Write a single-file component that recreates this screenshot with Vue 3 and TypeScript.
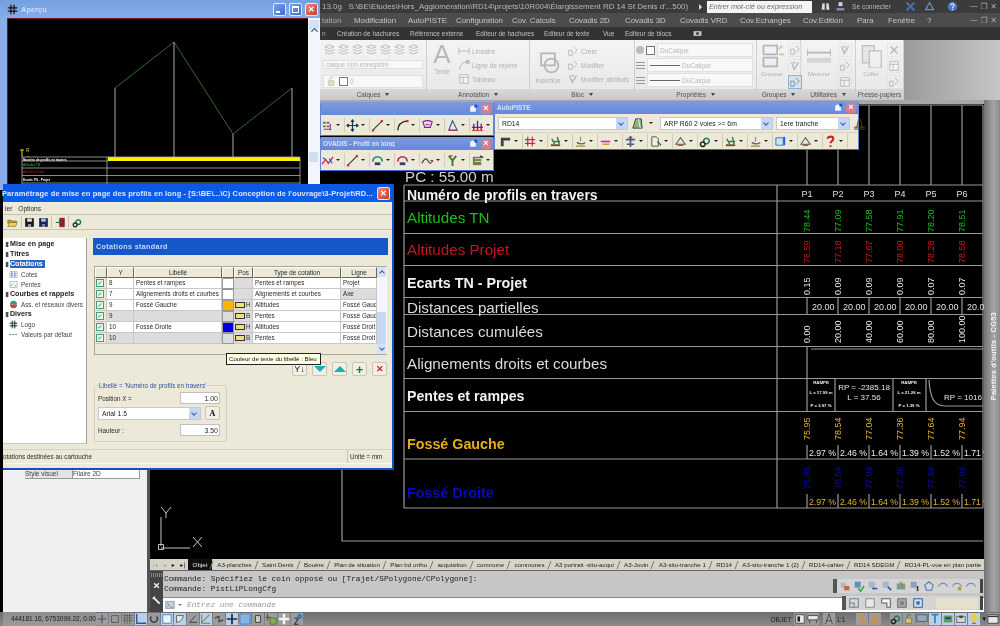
<template>
  <div class="screen">
    <!-- AutoCAD window behind everything -->
    <div class="acad">
      <div class="acad-title">
        <span class="path">13.0g &nbsp; S:\BE\Etudes\Hors_Agglomération\RD14\projets\10R004\Élargissement RD 14 St Denis d'...500)</span>
        <span class="arrow-r"></span>
        <span class="search">Entrer mot-clé ou expression</span>
        <Ico n="binoc" class="ti" />
        <Ico n="user" class="ti" />
        <span class="login">Se connecter</span>
        <Ico n="xchg" class="ti wide" />
        <Ico n="tri3" class="ti" />
        <Ico n="help" class="ti wide" />
        <span class="winbtns">— ❐ ✕</span>
      </div>
      <div class="acad-menu">
        <span v-for="m in menus" :key="m.t" :style="{ width: m.w + 'px' }">{{ m.t }}</span>
        <span class="winbtns">— ❐ ✕</span>
      </div>
      <div class="acad-tabs">
        <span v-for="m in ribbonTabs" :key="m.t" :style="{ width: m.w + 'px' }">{{ m.t }}</span>
        <Ico n="cam" class="ti" />
      </div>

      <div class="ribbon">
        <div class="panel" style="width: 107px">
          <div class="panel-body col">
            <div class="rib-row"><Ico v-for="(n, i) in calqueIcons" :key="i" :n="n" class="fade" /></div>
            <div class="rib-select">calque non enregistré</div>
            <div class="rib-select"><Ico n="lock" class="fade" /><i class="sq"></i>0</div>
          </div>
          <div class="panel-label">Calques <b></b></div>
        </div>
        <div class="panel" style="width: 103px">
          <div class="panel-body">
            <div class="big">
              <span class="big-a">A</span>
              <span>Texte</span>
            </div>
            <div class="col list">
              <span><Ico n="dim" class="fade" />Linéaire</span>
              <span><Ico n="lead" class="fade" />Ligne de repère</span>
              <span><Ico n="table" class="fade" />Tableau</span>
            </div>
          </div>
          <div class="panel-label">Annotation <b></b></div>
        </div>
        <div class="panel" style="width: 105px">
          <div class="panel-body">
            <div class="big ins">
              <Ico n="insert" class="big-ico fade" />
              <span>Insertion</span>
            </div>
            <div class="col list">
              <span><Ico n="bk" class="fade" />Créer</span>
              <span><Ico n="bk" class="fade" />Modifier</span>
              <span><Ico n="bk2" class="fade" />Modifier attributs</span>
            </div>
          </div>
          <div class="panel-label">Bloc <b></b></div>
        </div>
        <div class="panel" style="width: 122px">
          <div class="panel-body col props">
            <div class="prop-row"><i class="ball"></i><i class="sq"></i><div class="rib-select">DuCalque</div></div>
            <div class="prop-row"><i class="bars"></i><div class="rib-select"><i class="ln"></i>DuCalque</div></div>
            <div class="prop-row"><i class="bars"></i><div class="rib-select"><i class="ln"></i>DuCalque</div></div>
          </div>
          <div class="panel-label">Propriétés <b></b></div>
        </div>
        <div class="panel" style="width: 44px">
          <div class="panel-body">
            <div class="big small"><Ico n="group" class="big-ico fade" /><span>Grouper</span></div>
            <div class="col tiny"><Ico n="bk" class="fade" /><Ico n="bk2" class="fade" /><Ico n="bk" class="fade on" /></div>
          </div>
          <div class="panel-label">Groupes <b></b></div>
        </div>
        <div class="panel" style="width: 55px">
          <div class="panel-body">
            <div class="big small"><Ico n="measure" class="big-ico fade" /><span>Mesurer</span></div>
            <div class="col tiny"><Ico n="bk2" class="fade" /><Ico n="bk" class="fade" /><Ico n="table" class="fade" /></div>
          </div>
          <div class="panel-label">Utilitaires <b></b></div>
        </div>
        <div class="panel" style="width: 48px">
          <div class="panel-body">
            <div class="big small"><Ico n="paste" class="big-ico fade" /><span>Coller</span></div>
            <div class="col tiny"><Ico n="cross" class="fade" /><Ico n="table" class="fade" /><Ico n="bk" class="fade" /></div>
          </div>
          <div class="panel-label">Presse-papiers</div>
        </div>
        <div class="ribbon-rest"></div>
      </div>

      <div class="main">
        <div class="side">
          <div class="side-inner">
            <div class="prop-line"><span>Style visuel</span><span class="val">Filaire 2D</span></div>
          </div>
        </div>
        <div class="center">
          <div class="cad">
            <svg class="drawing" viewBox="150 104 834 455" width="834" height="455">
              <g class="grey-lines">
                <path d="M857 105H983M983 105V508" />
                <path v-for="x in px" :key="x" :d="`M${x} 105V185`" />
                <path d="M342 470V541H983" />
                <path v-for="y in rowLines" :key="y" :d="`M404 ${y}H983`" />
                <path d="M404 185V508M777 185V508" />
                <path v-for="x in px" :key="'d' + x" :d="`M${x} 298V314`" />
                <path d="M807 346V378M811 349H983" />
                <path d="M807 379V411M835 379V411M893 379V411M926 379V411" />
                <path d="M929 380C930 396 933 406 945 406H983" />
                <template v-for="x in px" :key="'p' + x">
                  <path :d="`M${x} 445V459M${x} 494V508`" />
                </template>
              </g>
              <path class="ucs" d="M161 546V517M161 548H190M158.500 544.500h5v5h-5zM193 537l9 10M202 537l-9 10M161 507l5 6M171 507l-5 6v5" />

              <text x="405" y="182" class="lab" fill="#cfcfcf" font-size="15.200">PC : 55.00 m</text>
              <text v-for="r in labels" :key="r.t" x="407" :y="r.y" :fill="r.c" :font-size="r.s ?? 15.2" :font-weight="r.s ? 700 : 400" class="lab">{{ r.t }}</text>

              <text v-for="(x, i) in px" :key="'pn' + i" :x="x" y="197" class="num mid" fill="#e0e0e0">P{{ i + 1 }}</text>

              <template v-for="s in rotated" :key="s.k">
                <text
                  v-for="(v, i) in s.v"
                  :key="i"
                  class="num"
                  :fill="s.c"
                  :transform="`translate(${px[i] + 3.2} ${s.y}) rotate(-90)`"
                >{{ v }}</text>
              </template>

              <text v-for="(x, i) in px" :key="'dp' + i" :x="x + 5" y="310" class="num" fill="#e0e0e0">20.00</text>

              <g class="tinybox">
                <text x="821" y="384" class="mid b">RAMPE</text>
                <text x="821" y="394" class="mid">L = 17.99 m</text>
                <text x="821" y="407" class="mid">P = 2.97 %</text>
                <text x="909" y="384" class="mid b">RAMPE</text>
                <text x="909" y="394" class="mid">L = 21.26 m</text>
                <text x="909" y="407" class="mid">P = 1.39 %</text>
              </g>
              <text x="864" y="390" class="num small mid" fill="#e6e6e6">RP = -2385.18</text>
              <text x="864" y="400" class="num small mid" fill="#e6e6e6">L = 37.56</text>
              <text x="944" y="400" class="num small" fill="#e6e6e6">RP = 1016</text>

              <text v-for="(v, i) in percents" :key="'g' + i" :x="px[i] + 2" y="456" class="num pc" fill="#e8e8e8">{{ v }} %</text>
              <text v-for="(v, i) in percents" :key="'h' + i" :x="px[i] + 2" y="505" class="num pc" fill="#e0b428">{{ v }} %</text>
            </svg>
          </div>

          <div class="sheets">
            <div class="sheet-nav">
              <i class="off">|◂</i><i class="off">◂</i><i>▸</i><i>▸|</i>
            </div>
            <span class="sheet active">Objet</span>
            <span v-for="t in sheets" :key="t" class="sheet">{{ t }}</span>
          </div>

          <div class="cmd">
            <div class="cmd-grip">
              <i class="dots"></i>
              <Ico n="closew" />
              <Ico n="wrench" />
            </div>
            <div class="cmd-body">
              <div class="cmd-hist">
                <div>Commande: Spécifiez le coin opposé ou [Trajet/SPolygone/CPolygone]:</div>
                <div>Commande: PistLiPLongCfg</div>
              </div>
              <div class="cmd-input"><Ico n="prompt" /><b></b>Entrez une commande</div>
              <div class="dock dock-a">
                <Ico v-for="(n, i) in dockA" :key="i" :n="n" />
              </div>
              <div class="dock dock-b">
                <Ico v-for="(n, i) in dockB" :key="i" :n="n" />
                <span class="dock-sel"></span>
              </div>
            </div>
          </div>
        </div>
        <div class="palette"><span>Palettes d'outils - CG53</span></div>
      </div>

      <div class="status">
        <span class="coords">444181.16, 6753099.22, 0.00</span>
        <Ico v-for="(n, i) in statusLeft" :key="i" :n="n.i" :class="['st', { on: n.on }]" />
        <span class="spacer"></span>
        <span class="objet">OBJET</span>
        <Ico n="sh1" class="st" /><Ico n="sh2" class="st" />
        <Ico n="anno" class="st gap" /><span class="one">1:1</span>
        <Ico n="anno2" class="st gap-s" /><Ico n="anno2" class="st" />
        <Ico n="gearg" class="st gap-s" /><Ico n="lock" class="st" /><Ico n="mon" class="st" />
        <Ico v-for="(n, i) in statusRight" :key="'r' + i" :n="n" class="st on" />
        <span class="arrow-sm">▾</span>
        <Ico n="win" class="st" />
      </div>
    </div>

    <!-- floating toolbars -->
    <div class="tb-win" style="left: 320px; top: 102px; width: 174px">
      <div class="tb-title"><span></span><Ico n="pin" /><i class="x">×</i></div>
      <div class="tb-row"><template v-for="n in tbA" :key="n"><Ico :n="n" /><i class="dd"></i><i class="sep"></i></template></div>
    </div>
    <div class="tb-win" style="left: 320px; top: 137px; width: 174px">
      <div class="tb-title"><span>OVADIS - Profil en long</span><Ico n="pin" /><i class="x">×</i></div>
      <div class="tb-row"><template v-for="(n, i) in tbB" :key="i"><Ico :n="n" /><i class="dd"></i><i class="sep"></i></template></div>
    </div>
    <div class="tb-win auto" style="left: 494px; top: 101px; width: 365px">
      <div class="tb-title"><span>AutoPISTE</span><Ico n="pin" /><i class="x">×</i></div>
      <div class="tb-sel-row">
        <div class="xpsel" style="width: 130px">RD14<i class="xparrow"></i></div>
        <Ico n="road" /><i class="dd"></i>
        <div class="xpsel" style="width: 113px">ARP R60 2 voies &gt;= 6m<i class="xparrow"></i></div>
        <div class="xpsel" style="width: 74px">1ere tranche<i class="xparrow"></i></div>
        <Ico n="prof" />
      </div>
      <div class="tb-row"><template v-for="(n, i) in tbC" :key="i"><Ico :n="n" /><i class="dd"></i><i class="sep"></i></template></div>
    </div>

    <!-- Aperçu -->
    <div class="apercu">
      <div class="ap-title">
        <Ico n="hash" />
        <span>Aperçu</span>
        <i class="xp-b"><u class="g-min"></u></i>
        <i class="xp-b"><u class="g-max"></u></i>
        <i class="xp-b red">✕</i>
      </div>
      <div class="ap-body">
        <svg viewBox="7 18 301 166" width="301" height="166" class="ap-svg">
          <path d="M7 18.500H308M7.500 18V184" stroke="#701818" fill="none" />
          <path d="M115 88L174 42L233 134L292 88" stroke="#2f6a2a" fill="none" />
          <path d="M115 88V157M174 42V157M233 134V157M292 88V157" stroke="#a8a8a8" fill="none" />
          <rect x="108" y="157" width="192" height="4" fill="#fff000" />
          <path d="M22 157H300M22 161H108M22 168H300M22 175.500H300M22 183H300M22 157V184M107 157V184M300 157V184" stroke="#b0b0b0" fill="none" stroke-width=".8" />
          <path d="M22 157V150M20 150h4M28 157v-1" stroke="#e8d820" fill="none" />
          <text x="26" y="152" fill="#e8d820" font-size="4.500" class="lab">R</text>
          <text x="23" y="160.500" fill="#fff" font-size="3.200" font-weight="700" class="lab">Numéro de profils en travers</text>
          <text x="23" y="166" fill="#30c030" font-size="3.200" class="lab">Altitudes TN</text>
          <text x="23" y="173" fill="#b02020" font-size="3.200" class="lab">Altitudes Projet</text>
          <text x="23" y="181" fill="#fff" font-size="3.200" font-weight="700" class="lab">Ecarts TN - Projet</text>
        </svg>
        <div class="ap-scroll">
          <i class="ap-up"><u></u></i>
          <i class="ap-thumb"></i>
        </div>
      </div>
    </div>

    <!-- main dialog -->
    <div class="dlg">
      <div class="dlg-title">
        <span>Paramétrage de mise en page des profils en long - [S:\BE\...\C) Conception de l'ouvrage\3-Projet\RD...</span>
        <i class="xp-b red">✕</i>
      </div>
      <div class="dlg-menu"><span>ier</span><span>Options</span></div>
      <div class="dlg-tools">
        <Ico n="open" /><i class="tsep"></i><Ico n="save" /><Ico n="saveb" /><i class="tsep"></i><Ico n="exit" /><i class="tsep"></i><Ico n="gearg" />
      </div>
      <div class="dlg-body">
        <div class="tree">
          <div v-for="t in tree" :key="t.t" :class="['node', { child: t.child, bold: t.bold }]">
            <Ico v-if="t.i" :n="t.i" />
            <span :class="{ sel: t.sel }">{{ t.t }}</span>
          </div>
        </div>
        <div class="content">
          <div class="blue-head">Cotations standard</div>
          <div class="grid-wrap">
            <div class="grid">
              <div class="hd"></div>
              <div class="hd">Y</div>
              <div class="hd">Libellé</div>
              <div class="hd"></div>
              <div class="hd">Pos</div>
              <div class="hd">Type de cotation</div>
              <div class="hd">Ligne</div>
              <template v-for="(r, i) in cotes" :key="i">
                <div class="cell chk"><i class="check">✓</i></div>
                <div :class="['cell', { grey: r.grey }]">{{ r.y }}</div>
                <div :class="['cell', { grey: r.grey }]">{{ r.lib }}</div>
                <div class="cell swatch" :style="{ background: r.col }"></div>
                <div class="cell grey pos">
                  <template v-if="r.pos"><i class="yel"></i>{{ r.pos }}</template>
                </div>
                <div class="cell">{{ r.type }}</div>
                <div :class="['cell', { grey: r.ligne === 'Axe' }]">{{ r.ligne }}</div>
              </template>
            </div>
            <div class="grid-scroll">
              <i class="sb-btn"><u class="up"></u></i>
              <i class="sb-track"></i>
              <i class="sb-thumb"></i>
              <i class="sb-btn"><u class="down"></u></i>
            </div>
          </div>
          <div class="tip">Couleur de texte du libellé : Bleu</div>
          <div class="actions">
            <button class="first">Y<span>↓</span></button>
            <button><i class="tdown"></i></button>
            <button><i class="tup"></i></button>
            <button class="plus">+</button>
            <button class="del">✕</button>
          </div>
          <fieldset class="group">
            <legend>Libellé = 'Numéro de profils en travers'</legend>
            <div class="f-row r1"><span>Position X =</span><span class="inp">1.00</span></div>
            <div class="f-row r2">
              <div class="xpsel f-sel">Arial 1.5<i class="xparrow"></i></div>
              <button class="font-btn">A</button>
            </div>
            <div class="f-row r3"><span>Hauteur :</span><span class="inp">3.50</span></div>
          </fieldset>
        </div>
      </div>
      <div class="dlg-status">
        <span class="s1">otations destinées au cartouche</span>
        <span class="s2">Unité = mm</span>
      </div>
    </div>
  </div>
</template>

<script setup lang="ts">
import { h } from "vue";

interface Shape {
  d: string;
  f?: string;
  s?: string;
  w?: number;
}

const icons: Record<string, Shape[]> = {
  hash: [{ d: "M5 1V13M9 1V13M1 5H13M1 9H13", s: "#101010", w: 1.6 }],
  open: [
    { d: "M1 4h4l1 1h6v3H1z", f: "#c89820", s: "#604808", w: 0.6 },
    { d: "M1 12l2-5h10l-2 5z", f: "#f0d050", s: "#604808", w: 0.6 },
  ],
  save: [
    { d: "M1.500 1.500h11v11h-11z", f: "#181818" },
    { d: "M4 2h6v4H4z", f: "#e0e0e0" },
    { d: "M5 9h4v3.500H5z", f: "#a0a0a0" },
  ],
  saveb: [
    { d: "M1.500 1.500h11v11h-11z", f: "#182050" },
    { d: "M4 2h6v4H4z", f: "#b0b8d8" },
    { d: "M5 9h4v3.500H5z", f: "#8088a0" },
  ],
  exit: [
    { d: "M6 1.500h6v11H6z", f: "#a01818", s: "#601010", w: 0.6 },
    { d: "M1 7h6M5 4.500L7.500 7L5 9.500", s: "#187048", w: 1.4 },
  ],
  gearg: [
    { d: "M8 3.500a3 3 0 1 1-.01 0z", f: "none", s: "#207860", w: 1.8 },
    { d: "M4 7.500a2.500 2.500 0 1 1-.01 0z", f: "none", s: "#202020", w: 1.6 },
  ],
  cotes: [
    { d: "M1.500 2.500h11v9h-11z", f: "#fff", s: "#7080a0", w: 0.8 },
    { d: "M4.500 4v6M9 4v6M3 5h3M7.500 5h3M3 9h3M7.500 9h3", s: "#3040a0", w: 0.9 },
  ],
  pentes: [
    { d: "M1.500 2.500h11v9h-11z", f: "#fff", s: "#7080a0", w: 0.8 },
    { d: "M3 9l3-3M7 5l1 1M9 9h2", s: "#4048a0", w: 1 },
  ],
  ass: [
    { d: "M7 1.500a5 5 0 0 1 5 5H2a5 5 0 0 1 5-5z", f: "#30a8a0", s: "#106860", w: 0.6 },
    { d: "M2 7.500h10a5 5 0 0 1-10 0z", f: "#d04848", s: "#802020", w: 0.6 },
  ],
  logo: [{ d: "M5 1V13M9 1V13M1 5H13M1 9H13", s: "#103018", w: 1.5 }],
  dots: [{ d: "M1 7H3M5.500 7H7.500M10 7H12", s: "#2a4a90", w: 1.5 }],
  tree: [{ d: "M9 3h4v8H9z", f: "#505050" }],
  grid: [
    { d: "M2 3h3v2H2zM6 3h3v2H6zM2 7h3v2H2zM6 7h3v2H6z", f: "#707070" },
    { d: "M10 5v7M3 11h8", s: "#9030a0", w: 1.2 },
  ],
  move: [{ d: "M7 1V13M1 7H13M5.500 3L7 1L8.500 3M5.500 11L7 13L8.500 11M3 5.500L1 7L3 8.500M11 5.500L13 7L11 8.500", s: "#103860", w: 1.3 }],
  line: [{ d: "M2 12L12 2", s: "#303030", w: 1.1 }, { d: "M1 11h2.500v2.500H1zM10.500 1H13v2.500h-2.500z", f: "#d03030" }],
  curve: [{ d: "M2 12C2 6 6 3 12 2", s: "#202020", w: 1.5 }, { d: "M11 1h2.500v2.500H11z", f: "#d03030" }],
  shield: [{ d: "M2 3C6 1 8 1 12 3L10 9H4z", f: "#e8e0f0", s: "#8020a0", w: 1.2 }, { d: "M5 6h4", s: "#d03030", w: 1.2 }],
  tri: [{ d: "M3 12L7 2L12 12z", f: "none", s: "#2040a0", w: 1.1 }, { d: "M3 12H12", s: "#d03030", w: 1.2 }],
  fork: [{ d: "M7 2V12M3 5V12M11 5V12M1 9H13", s: "#702090", w: 1.5 }, { d: "M1 12.500H13", s: "#d03030", w: 1 }],
  tgreen: [{ d: "M1 11L5 6L8 10L13 3", s: "#d03060", w: 1.5 }, { d: "M2 4l3 2M9 5l3 5", s: "#3050a0", w: 1.2 }],
  dome: [{ d: "M2 8a5 5 0 0 1 10 0", f: "none", s: "#208070", w: 1.8 }, { d: "M4 9h6v3H4z", f: "#304060" }],
  domer: [{ d: "M2 8a5 5 0 0 1 10 0", f: "none", s: "#c02050", w: 1.8 }, { d: "M4 9h6v3H4z", f: "#304060" }],
  wave: [{ d: "M1 10C4 4 6 4 8 8S11 9 13 7", s: "#304040", w: 1.2 }, { d: "M10 7l3 0", s: "#d03030", w: 1.2 }],
  ypin: [{ d: "M3 2L7 7L11 2M7 7V13", s: "#308030", w: 2 }, { d: "M4 2h3", s: "#d03030", w: 1.5 }],
  sheet: [{ d: "M2 3h9v9H2z", f: "#708040" }, { d: "M4 5h7M4 8h7", s: "#e0e0e0", w: 1 }, { d: "M10 2l3 2", s: "#202020", w: 1.5 }],
  apL: [{ d: "M2 12V3H12V6H5V12z", f: "#404040" }],
  apR: [{ d: "M4 2V12M9 2V12M1 5H12M1 9H12", s: "#c03050", w: 1.3 }],
  apG: [{ d: "M2 11h10", s: "#705020", w: 2 }, { d: "M3 4l3 6M9 2l2 8M5 7h7", s: "#308040", w: 1.5 }],
  apB: [{ d: "M3 8C6 10 10 10 12 8", s: "#705090", w: 1.5 }, { d: "M7 2v5M2 12h10", s: "#a09030", w: 1.2 }],
  apP: [{ d: "M2 7H12", s: "#d030a0", w: 1.8 }, { d: "M4 10h7", s: "#d0a020", w: 1.6 }],
  apF: [{ d: "M7 1v12M2 5h10M3 10h8", s: "#406080", w: 1.8 }, { d: "M5 3h4", s: "#d03030", w: 1.5 }],
  apS: [{ d: "M3 2h5l2 2v8H3z", f: "#f0f0e0", s: "#505050", w: 1 }, { d: "M9 7l4 4", s: "#208060", w: 1.6 }],
  apT: [{ d: "M2 10L7 3L12 10z", f: "none", s: "#606060", w: 1.2 }, { d: "M4 11h6", s: "#d03030", w: 1.5 }],
  apV: [{ d: "M2 3h8v8H2z", f: "#d0e0f0", s: "#2080c0", w: 1 }, { d: "M11 2v9", s: "#2060e0", w: 2 }],
  qm: [{ d: "M4 4C4 1 10 1 10 4C10 7 7 6 7 9", s: "#d02020", w: 2.2 }, { d: "M6 11h2v2H6z", f: "#d02020" }],
  pin: [{ d: "M3 6a4 4 0 0 1 8 0v5H3z", f: "#f2f5fb" }, { d: "M9 1h4v4H9z", f: "#2050c0" }],
  road: [{ d: "M2 12L5 2H11L12 12z", f: "#90b080", s: "#305030", w: 1 }, { d: "M8 2L10 12", s: "#f0f0f0", w: 1 }],
  prof: [{ d: "M1 11H13M4 11L6 3L8 3L10 11", s: "#604010", w: 1 }, { d: "M1 13H13", s: "#604010", w: 1 }],
  binoc: [{ d: "M3 3h3v8H2zM8 3h3l1 8H8z", f: "#d8d8d8" }],
  user: [{ d: "M4.500 1.500h5v5h-5z", f: "#d0d0d8" }, { d: "M2 9h10v3H2z", f: "#8090b8" }],
  xchg: [{ d: "M2 2L12 12M12 2L2 12", s: "#4070c0", w: 2.6 }],
  tri3: [{ d: "M7 2L12 11H2z", f: "none", s: "#7090c8", w: 1.5 }],
  help: [{ d: "M7 1a6 6 0 1 1-.01 0z", f: "#5078c0" }, { d: "M5 5.500C5 3 9 3 9 5.500C9 7 7 7 7 9M7 10v1.500", s: "#fff", w: 1.3 }],
  cam: [{ d: "M2 4h10v6H2z", f: "#c8c8c8" }, { d: "M5 5.500h4v3H5z", f: "#444" }],
  lock: [{ d: "M3 6h7v6H3z", f: "#d8c070", s: "#606060", w: 0.7 }, { d: "M5 6V3.500a2 2 0 0 1 4 0", s: "#606060", w: 1 }],
  lay: [{ d: "M2 4L7 2L12 4L7 6zM2 7L7 9L12 7M2 10L7 12L12 10", s: "#607080", w: 1, f: "none" }],
  dim: [{ d: "M1 3V11M13 3V11M1 7H13", s: "#707070", w: 1 }],
  lead: [{ d: "M2 12C3 6 6 3 12 3", s: "#505050", w: 1 }, { d: "M10 2h3v3h-3z", f: "none", s: "#505050", w: 1 }],
  table: [{ d: "M2 2h10v10H2zM2 5h10M6 5v7", s: "#707070", w: 1, f: "#fff" }],
  insert: [{ d: "M3 2h8v7H3z", f: "none", s: "#707070", w: 1 }, { d: "M9 5a4 4 0 1 1-.01 0z", f: "none", s: "#707070", w: 1 }],
  bk: [{ d: "M2 6h4v6H2zM8 2l4 4-4 4", s: "#607070", w: 1, f: "none" }],
  bk2: [{ d: "M3 3l3 8 5-8M5 3h3", s: "#607070", w: 1.5, f: "none" }],
  group: [{ d: "M2 1h8v5H2zM2 8h8v5H2z", s: "#707070", w: 1, f: "none" }, { d: "M11 3l2-2M11 6h3", s: "#a09040", w: 1 }],
  measure: [{ d: "M0 3V7M14 3V7M0 5H14", s: "#707070", w: 1 }, { d: "M0 8H14V11H0z", f: "#b8b8b8" }],
  paste: [{ d: "M2 1h7v10H2z", f: "#d8d8d8", s: "#808080", w: 0.7 }, { d: "M6 4h7v10H6z", f: "#f0f0f0", s: "#808080", w: 0.7 }],
  cross: [{ d: "M3 3L11 11M11 3L3 11", s: "#707070", w: 1.6 }],
  closew: [{ d: "M4 4L10 10M10 4L4 10", s: "#eee", w: 1.8 }],
  wrench: [{ d: "M3 3l8 8", s: "#eee", w: 2.5 }, { d: "M2 5L5 2", s: "#eee", w: 1.5 }],
  prompt: [{ d: "M1 2h12v10H1z", f: "#c8d0d8", s: "#8090a0", w: 1 }, { d: "M3 4l3 3-3 3M7 10h4", s: "#607080", w: 1 }],
  d1: [{ d: "M2 3h6v6H2z", f: "#b0b8c8" }, { d: "M6 7h6v5H6z", f: "#c86830" }],
  d2: [{ d: "M2 2h7v7H2z", f: "#6090c0" }, { d: "M6 10l3 3 4-6", s: "#30a040", w: 1.8 }],
  d3: [{ d: "M2 2h7v7H2z", f: "#a0b8d0" }, { d: "M6 10h6", s: "#3050a0", w: 1.8 }],
  d4: [{ d: "M2 2h7v7H2z", f: "#a0b8d0" }, { d: "M8 8l4 4", s: "#3050a0", w: 1.8 }],
  d5: [{ d: "M2 4h10v7H2z", f: "#70a090" }, { d: "M6 2l4 6", s: "#c08030", w: 1.8 }],
  d6: [{ d: "M2 2h7v7H2z", f: "#90a0b8" }, { d: "M10 7v6", s: "#303030", w: 1.8 }],
  d7: [{ d: "M7 2L12 6L10 12H4L2 6z", f: "none", s: "#5080b0", w: 1.3 }],
  d8: [{ d: "M2 8a5 4 0 0 1 10 0", f: "none", s: "#7090a0", w: 1.3 }],
  d9: [{ d: "M2 8a5 4 0 0 1 10 0", f: "none", s: "#8090a0", w: 1.3 }, { d: "M8 8h4v4H8z", f: "#c09830" }],
  e1: [{ d: "M2 2h10v10H2zM2 7h5v5", s: "#708090", w: 1.2, f: "#d8d8d8" }],
  e2: [{ d: "M2 2h10v10H2z", s: "#909090", w: 1.2, f: "#e8e8e8" }],
  e3: [{ d: "M2 2h10v10H8V7H2z", s: "#606060", w: 1.2, f: "#f4f4f4" }],
  e4: [{ d: "M2 2h10v10H2z", s: "#606060", w: 1, f: "#aaa" }, { d: "M5 5h4v4H5z", f: "#777" }],
  e5: [{ d: "M2 2h10v10H2z", s: "#3060a0", w: 1.2, f: "#dde" }, { d: "M5 5h4v4H5z", f: "#4070b0" }],
  s1: [{ d: "M2 7H12M7 2V12", s: "#40506a", w: 1.4 }, { d: "M8 8h4v4H8z", f: "#a0a0a0" }],
  s2: [{ d: "M3 3h8v8H3z", f: "none", s: "#555", w: 1 }],
  s3: [{ d: "M1 3H13M1 6H13M1 9H13M3 1V13M6 1V13M9 1V13", s: "#555", w: 0.8 }],
  s4: [{ d: "M2 1V12H13", s: "#2a5a90", w: 1.6 }],
  s5: [{ d: "M4 4a4 4 0 1 0 6 0", f: "none", s: "#304050", w: 1.6 }],
  s6: [{ d: "M2 2h10v10H2z", f: "#eaf2fb", s: "#3a80c0", w: 1 }],
  s7: [{ d: "M3 3h8c-1 4-3 7-8 8z", f: "#eaeaea", s: "#555", w: 1 }],
  s8: [{ d: "M3 11H12M3 11L10 3", s: "#404040", w: 1.1 }],
  s9: [{ d: "M2 11L11 2", s: "#c09030", w: 1.6 }, { d: "M2 2V12H12", s: "#3070b0", w: 1 }],
  s10: [{ d: "M2 6L7 4V10L12 8", s: "#404040", w: 1.4 }],
  s11: [{ d: "M7 1V13M1 7H13", s: "#1a2a50", w: 2 }],
  s12: [{ d: "M1 1h12v12H1z", f: "#8ab4e0", s: "#3070b0", w: 1 }],
  s13: [{ d: "M4 3h6v8H4z", f: "#c8c8c8", s: "#333", w: 1 }],
  s14: [{ d: "M3 1V9M7 5H1", s: "#404040", w: 1 }, { d: "M6 6h7v7H6z", f: "#80b050", s: "#406020", w: 0.8 }],
  s15: [{ d: "M7 1V13M1 7H13", s: "#f2f2f2", w: 3 }],
  s16: [{ d: "M4 6h5l-5 7h5", s: "#333", w: 1.2 }, { d: "M10 1a3 3 0 1 1-.01 0z", f: "#3080c0" }],
  sh1: [{ d: "M2 2h10v10H2z", f: "#e8e8e8", s: "#444", w: 1 }, { d: "M4 4h3v6H4z", f: "#222" }],
  sh2: [{ d: "M1 3h12v5H1z", f: "#e8e8e8", s: "#444", w: 1 }, { d: "M3 8V12M11 8V12", s: "#444", w: 1 }],
  anno: [{ d: "M7 1L3 13M7 1l4 12M4 9h6", s: "#444", w: 1 }],
  anno2: [{ d: "M7 1L3 13M7 1l4 12M4 9h6", s: "#d09030", w: 1.4 }],
  mon: [{ d: "M1 2h12v8H1z", f: "#90a8c0", s: "#444", w: 0.8 }],
  r1: [{ d: "M3 2l8 0M7 2V12", s: "#3080c0", w: 2 }],
  r2: [{ d: "M2 3h10v8H2z", f: "#50a060" }, { d: "M4 6h6", s: "#303080", w: 2 }],
  r3: [{ d: "M2 4h10v7H2z", f: "#d8d8d8", s: "#444", w: 0.8 }, { d: "M5 3h4v3H5z", f: "#444" }],
  r4: [{ d: "M7 1a4 4 0 0 1 2 7.500V11H5V8.500A4 4 0 0 1 7 1z", f: "#e8d040" }, { d: "M5 12h4", s: "#555", w: 1.2 }],
  win: [{ d: "M1 2h12v10H1z", f: "#e8e8e8", s: "#333", w: 1 }, { d: "M1 4h12", s: "#333", w: 1.5 }],
};

const Ico = (props: { n: string }) =>
  h(
    "svg",
    { viewBox: "0 0 14 14", width: 14, height: 14 },
    (icons[props.n] ?? []).map((p) =>
      h("path", {
        d: p.d,
        fill: p.f ?? "none",
        stroke: p.s ?? "none",
        "stroke-width": p.w ?? 1,
      }),
    ),
  );
Ico.props = ["n"];

const menus = [
  { t: "tation", w: 32 },
  { t: "Modification", w: 54 },
  { t: "AutoPISTE", w: 48 },
  { t: "Configuration", w: 56 },
  { t: "Cov. Calculs", w: 57 },
  { t: "Covadis 2D", w: 56 },
  { t: "Covadis 3D", w: 55 },
  { t: "Covadis VRD", w: 60 },
  { t: "Cov.Echanges", w: 63 },
  { t: "Cov.Edition", w: 54 },
  { t: "Para", w: 31 },
  { t: "Fenêtre", w: 39 },
  { t: "?", w: 20 },
];

const ribbonTabs = [
  { t: "n", w: 15 },
  { t: "Création de hachures", w: 73 },
  { t: "Référence externe", w: 66 },
  { t: "Editeur de hachures", w: 68 },
  { t: "Editeur de texte", w: 59 },
  { t: "Vue", w: 22 },
  { t: "Editeur de blocs", w: 65 },
];

const calqueIcons = ["lay", "lay", "lay", "lay", "lay", "lay", "lay"];

const px = [807, 838, 869, 900, 931, 962];
const rowLines = [185, 201, 233.5, 265.5, 297.5, 314.5, 346.5, 378.5, 411.5, 459, 508];

const labels: { t: string; y: number; c: string; s?: number }[] = [
  { t: "Numéro de profils en travers", y: 200, c: "#f2f2f2", s: 14 },
  { t: "Altitudes TN", y: 223, c: "#18c018" },
  { t: "Altitudes Projet", y: 255, c: "#c01820" },
  { t: "Ecarts TN - Projet", y: 288, c: "#f2f2f2", s: 14.3 },
  { t: "Distances partielles", y: 313, c: "#dcdcdc" },
  { t: "Distances cumulées", y: 337, c: "#dcdcdc" },
  { t: "Alignements droits et courbes", y: 369, c: "#dcdcdc" },
  { t: "Pentes et rampes", y: 401, c: "#f2f2f2", s: 14.2 },
  { t: "Fossé Gauche", y: 449, c: "#e8ae14", s: 14.3 },
  { t: "Fossé Droite", y: 498, c: "#0808c8", s: 14.3 },
];

const rotated = [
  { k: "tn", y: 232, c: "#18c018", v: ["78.44", "77.09", "77.58", "77.91", "78.20", "78.51"] },
  { k: "pj", y: 263, c: "#c81820", v: ["76.59", "77.18", "77.67", "78.00", "78.28", "78.58"] },
  { k: "ec", y: 295, c: "#e8e8e8", v: ["0.15", "0.09", "0.09", "0.09", "0.07", "0.07"] },
  { k: "cu", y: 343, c: "#e8e8e8", v: ["0.00", "20.00", "40.00", "60.00", "80.00", "100.00"] },
  { k: "fg", y: 440, c: "#e0b428", v: ["75.95", "78.54", "77.04", "77.36", "77.64", "77.94"] },
  { k: "fd", y: 489, c: "#0808b8", v: ["75.95", "78.54", "77.04", "77.36", "77.64", "77.94"] },
];

const percents = ["2.97", "2.46", "1.64", "1.39", "1.52", "1.71"];

const sheets = [
  "A3-planches",
  "Saint Denis",
  "Bouère",
  "Plan de situation",
  "Plan bd ortho",
  "acquisition",
  "commune",
  "communes",
  "A3 portrait -situ-acqui",
  "A3-Jouin",
  "A3-situ-tranche 1",
  "RD14",
  "A3-situ-tranche 1 (2)",
  "RD14-cahier",
  "RD14 SDEGM",
  "RD14-PL-vue en plan partie",
];

const dockA = ["d1", "d2", "d3", "d4", "d5", "d6", "d7", "d8", "d9", "d8"];
const dockB = ["e1", "e2", "e3", "e4", "e5"];

const statusLeft = [
  { i: "s1" },
  { i: "s2" },
  { i: "s3" },
  { i: "s4", on: true },
  { i: "s5" },
  { i: "s6", on: true },
  { i: "s7", on: true },
  { i: "s8" },
  { i: "s9", on: true },
  { i: "s10" },
  { i: "s11", on: true },
  { i: "s12", on: true },
  { i: "s13" },
  { i: "s14" },
  { i: "s15" },
  { i: "s16" },
];
const statusRight = ["r1", "r2", "r3", "r4"];

const tbA = ["grid", "move", "line", "curve", "shield", "tri", "fork"];
const tbB = ["tgreen", "line", "dome", "domer", "wave", "ypin", "sheet"];
const tbC = ["apL", "apR", "apG", "apB", "apP", "apF", "apS", "apT", "gearg", "apG", "apB", "apV", "apT", "qm"];

const tree = [
  { t: "Mise en page", bold: true, i: "tree" },
  { t: "Titres", bold: true, i: "tree" },
  { t: "Cotations", bold: true, sel: true, i: "tree" },
  { t: "Cotes", child: true, i: "cotes" },
  { t: "Pentes", child: true, i: "pentes" },
  { t: "Courbes et rappels", bold: true, i: "tree" },
  { t: "Ass. et réseaux divers", child: true, i: "ass" },
  { t: "Divers", bold: true, i: "tree" },
  { t: "Logo", child: true, i: "logo" },
  { t: "Valeurs par défaut", child: true, i: "dots" },
];

const cotes = [
  { y: "8", lib: "Pentes et rampes", col: "#fff", pos: "", type: "Pentes et rampes", ligne: "Projet" },
  { y: "7", lib: "Alignements droits et courbes", col: "#fff", pos: "", type: "Alignements et courbes", ligne: "Axe" },
  { y: "9", lib: "Fossé Gauche", col: "#ffb400", pos: "H", type: "Altitudes", ligne: "Fossé Gauc" },
  { y: "9", lib: "", col: "#dcdcdc", pos: "B", type: "Pentes", ligne: "Fossé Gauc", grey: true },
  { y: "10", lib: "Fossé Droite", col: "#0000e0", pos: "H", type: "Altitudes", ligne: "Fossé Droit" },
  { y: "10", lib: "", col: "#dcdcdc", pos: "B", type: "Pentes", ligne: "Fossé Droit", grey: true },
];
</script>

<style>
html,
body {
  margin: 0;
  background: #000;
}
</style>

<style scoped>
.screen {
  position: relative;
  width: 1000px;
  height: 626px;
  overflow: hidden;
  font-family: "Liberation Sans", Arial, sans-serif;
  filter: blur(0.45px);
}

i {
  font-style: normal;
}

.acad {
  display: flex;
  flex-direction: column;
  height: 626px;
  background: #000;
}

.acad-title {
  display: flex;
  align-items: center;
  height: 13px;
  padding-left: 322px;
  background: #3b3b3b;
  color: #b8b8b8;
  font-size: 7.93px;
  white-space: nowrap;
}

.path {
  width: 377px;
  overflow: hidden;
}

.arrow-r {
  border-left: 3px solid #ddd;
  border-top: 3px solid transparent;
  border-bottom: 3px solid transparent;
  margin-right: 5px;
}

.search {
  width: 105px;
  height: 12px;
  line-height: 12px;
  padding-left: 2px;
  box-sizing: border-box;
  background: #f4f4f4;
  color: #707070;
  font-style: italic;
  font-size: 7.3px;
  margin-right: 6px;
}

.ti {
  width: 11px;
  height: 11px;
  margin: 0 2px;
}

.ti.wide {
  margin: 0 6px 0 10px;
}

.login {
  font-size: 6.6px;
  margin: 0 4px;
}

.winbtns {
  margin-left: auto;
  padding-right: 3px;
  font-size: 8px;
  color: #aaa;
  font-family: "DejaVu Sans", sans-serif;
}

.acad-menu {
  display: flex;
  align-items: center;
  height: 14px;
  padding-left: 322px;
  background: #4c4c4c;
  color: #c4c4c4;
  font-size: 7.9px;
  white-space: nowrap;
}

.acad-tabs {
  display: flex;
  align-items: center;
  height: 13px;
  padding-left: 322px;
  background: #333;
  color: #c0c0c0;
  font-size: 6.5px;
  white-space: nowrap;
}

.acad-tabs span:first-child,
.acad-menu span:first-child {
  color: #aaa;
}

.ribbon {
  display: flex;
  height: 60px;
  padding-left: 320px;
  background: #e8e8e8;
}

.panel {
  display: flex;
  flex-direction: column;
  box-sizing: border-box;
  border-right: 1px solid #cfcfcf;
  background: linear-gradient(#f4f4f4, #e6e6e6);
  color: #b0b0b0;
  font-size: 6.5px;
}

.panel-body {
  flex: 1;
  display: flex;
  gap: 4px;
  padding: 3px 3px 0;
  min-height: 0;
}

.panel-label {
  height: 11px;
  line-height: 11px;
  text-align: center;
  background: linear-gradient(#d8d8d8, #c8c8c8);
  color: #505050;
  font-size: 6.5px;
  white-space: nowrap;
}

.panel-label b {
  display: inline-block;
  margin-left: 3px;
  vertical-align: 1px;
  border-top: 3px solid #444;
  border-left: 2.5px solid transparent;
  border-right: 2.5px solid transparent;
}

.col {
  display: flex;
  flex-direction: column;
}

.rib-row {
  display: flex;
  gap: 1px;
  height: 14px;
}

.rib-row svg {
  width: 13px;
  height: 13px;
}

.fade {
  opacity: 0.45;
}

.rib-select {
  flex: 1;
  display: flex;
  align-items: center;
  gap: 2px;
  height: 12px;
  margin-bottom: 2px;
  padding: 0 2px;
  background: #f8f8f8;
  border: 1px solid #e0e0e0;
  color: #b8b8b8;
  white-space: nowrap;
}

.rib-select svg {
  width: 11px;
  height: 11px;
}

.sq {
  display: inline-block;
  width: 9px;
  height: 9px;
  box-sizing: border-box;
  border: 1px solid #777;
  background: #fff;
}

.ln {
  width: 30px;
  height: 1px;
  background: #666;
}

.big {
  display: flex;
  flex-direction: column;
  align-items: center;
  width: 24px;
  flex-shrink: 0;
  white-space: nowrap;
}

.big-a {
  height: 23px;
  line-height: 23px;
  margin-bottom: 2px;
  font-size: 26px;
  color: #b8b8b8;
}

.big-ico {
  width: 24px;
  height: 24px;
  margin-bottom: 3px;
}

.ins {
  width: 30px;
  margin-top: 7px;
}

.big.small {
  width: auto;
  flex: 1;
  margin-top: 1px;
  font-size: 6px;
}

.list {
  gap: 2px;
  margin-top: 2px;
  white-space: nowrap;
}

.list span {
  display: flex;
  align-items: center;
  gap: 2px;
}

.list svg {
  width: 12px;
  height: 12px;
}

.props {
  gap: 1px;
  padding-left: 1px;
}

.prop-row {
  display: flex;
  align-items: center;
  gap: 2px;
  height: 14px;
}

.prop-row .rib-select {
  margin: 0;
}

.ball {
  width: 8px;
  height: 8px;
  border-radius: 50%;
  background: #bbb;
}

.bars {
  width: 9px;
  height: 7px;
  background: repeating-linear-gradient(#999 0 1px, transparent 1px 3px);
}

.tiny {
  gap: 2px;
  justify-content: flex-start;
}

.tiny svg {
  width: 12px;
  height: 12px;
  background: #eee;
  border: 1px solid #ddd;
}

.tiny .on {
  background: #cfe2f5;
  border-color: #7aa5d0;
  opacity: 0.8;
}

.ribbon-rest {
  flex: 1;
  background: linear-gradient(90deg, #9a9a9a, #c6c6c6);
}

.main {
  flex: 1;
  display: flex;
  min-height: 0;
}

.side {
  width: 150px;
  flex-shrink: 0;
  box-sizing: border-box;
  padding-left: 3px;
  background: #000;
  border-right: 3px solid #555;
}

.side-inner {
  height: 100%;
  background: #f0f0f0;
  padding-top: 370px;
  box-sizing: border-box;
}

.prop-line {
  display: flex;
  margin-left: 22px;
  width: 115px;
  height: 8px;
  line-height: 7px;
  font-size: 6.5px;
  color: #444;
  background: #e4e4e4;
  border-bottom: 1px solid #999;
  box-sizing: content-box;
}

.prop-line span {
  width: 47px;
}

.prop-line .val {
  flex: 1;
  background: #fff;
  border-left: 1px solid #999;
  border-right: 1px solid #999;
}

.center {
  width: 834px;
  display: flex;
  flex-direction: column;
  flex-shrink: 0;
}

.cad {
  height: 459px;
  border-top: 4px solid #a8a8a8;
  box-sizing: border-box;
  background: #000;
}

.drawing {
  display: block;
}

.grey-lines path {
  fill: none;
  stroke: #989898;
  stroke-width: 1.2;
}

.ucs {
  fill: none;
  stroke: #c4c4c4;
  stroke-width: 1;
}

.lab {
  font-family: "Liberation Sans", Arial, sans-serif;
}

.num {
  font-family: "Liberation Sans", Arial, sans-serif;
  font-size: 9px;
}

.num.pc {
  font-size: 8.7px;
}

.num.small {
  font-size: 8px;
}

.mid {
  text-anchor: middle;
}

.tinybox text {
  font-family: "Liberation Sans", Arial, sans-serif;
  font-size: 4.3px;
  font-weight: 700;
  fill: #f0f0f0;
}

.palette {
  flex: 1;
  border-left: 2px solid #777;
  background: linear-gradient(90deg, #7e7e7e, #a4a4a4 55%, #8a8a8a);
  display: flex;
  justify-content: center;
  align-items: flex-start;
  padding-top: 212px;
  min-width: 0;
}

.palette span {
  writing-mode: vertical-rl;
  transform: rotate(180deg);
  font-size: 7.5px;
  font-weight: 700;
  color: #f4f4f4;
  white-space: nowrap;
  letter-spacing: 0.2px;
}

.sheets {
  display: flex;
  align-items: center;
  height: 11px;
  flex-shrink: 0;
  background: #d6d3c8;
  overflow: hidden;
  white-space: nowrap;
}

.sheet-nav {
  display: flex;
  width: 38px;
  height: 11px;
  flex-shrink: 0;
  align-items: center;
  justify-content: space-around;
  font-size: 6px;
  color: #111;
  font-family: "DejaVu Sans", sans-serif;
}

.sheet-nav .off {
  color: #aaa;
}

.sheet {
  position: relative;
  flex-shrink: 0;
  height: 11px;
  line-height: 11px;
  padding: 0 5px 0 5.3px;
  font-size: 6.2px;
  color: #222;
}

.sheet::after {
  content: "";
  position: absolute;
  right: 0;
  top: 2px;
  height: 8px;
  width: 1px;
  background: #777;
  transform: skewX(-20deg);
}

.sheet.active {
  width: 24px;
  padding: 0;
  box-sizing: border-box;
  text-align: center;
  background: #101010;
  color: #e8e8e8;
}

.cmd {
  display: flex;
  flex: 1;
  min-height: 0;
  background: #000;
  border-top: 1px solid #666;
  box-sizing: border-box;
}

.cmd-grip {
  display: flex;
  flex-direction: column;
  align-items: center;
  width: 13px;
  flex-shrink: 0;
  background: #444;
}

.cmd-grip svg {
  width: 11px;
  height: 11px;
  margin-bottom: 4px;
}

.dots {
  width: 11px;
  height: 4px;
  margin: 2px 0 3px;
  background: repeating-linear-gradient(90deg, #888 0 1px, transparent 1px 2px);
}

.cmd-body {
  position: relative;
  flex: 1;
  display: flex;
  flex-direction: column;
  min-width: 0;
}

.cmd-hist {
  flex: 1;
  padding: 3px 0 0 1px;
  background: #c6c6c6;
  font-family: "Liberation Mono", "Courier New", monospace;
  font-size: 7.8px;
  line-height: 10px;
  color: #222;
}

.cmd-input {
  display: flex;
  align-items: center;
  height: 14px;
  background: #fff;
  border-top: 1px solid #888;
  color: #9a9a9a;
  font-family: "Liberation Mono", "Courier New", monospace;
  font-style: italic;
  font-size: 7.8px;
  padding-left: 2px;
}

.cmd-input svg {
  width: 10px;
  height: 10px;
}

.cmd-input b {
  margin: 0 5px 0 3px;
  border-top: 2px solid #777;
  border-left: 2px solid transparent;
  border-right: 2px solid transparent;
}

.dock {
  position: absolute;
  display: flex;
  align-items: center;
  height: 14px;
  background: #d4d4d4;
  border-left: 4px solid #555;
  border-right: 3px solid #444;
  box-sizing: border-box;
  gap: 2px;
  padding-left: 2px;
}

.dock svg {
  width: 12px;
  height: 12px;
}

.dock-a {
  top: 8px;
  right: 1px;
  width: 150px;
}

.dock-b {
  top: 25px;
  right: 1px;
  width: 141px;
  gap: 4px;
}

.dock-sel {
  flex: 1;
  height: 11px;
  margin: 0 2px 0 8px;
  background: #e4e0cc;
}

.status {
  display: flex;
  align-items: center;
  height: 14px;
  flex-shrink: 0;
  padding-left: 3px;
  background: linear-gradient(#6e6e6e, #8a8a8a);
  color: #1e1e1e;
  font-size: 6.5px;
  white-space: nowrap;
}

.coords {
  width: 93px;
  box-sizing: border-box;
  padding-left: 8px;
  height: 14px;
  line-height: 14px;
  background: linear-gradient(#8c8c8c, #9a9a9a);
}

.st {
  width: 12px;
  height: 12px;
  margin-right: 1px;
  background: #9c9c9c;
}

.st.on {
  background: #b8d0ea;
}

.spacer {
  flex: 1;
}

.objet {
  margin-right: 3px;
}

.gap {
  margin-left: 3px;
}

.gap-s {
  margin-left: 8px;
}

.one {
  margin-right: 3px;
}

.arrow-sm {
  font-size: 7px;
  color: #111;
  margin: 0 1px;
  font-family: "DejaVu Sans", sans-serif;
}

/* floating toolbars */
.tb-win {
  position: absolute;
  background: #ece9d8;
  border: 1px solid #6a84d0;
  border-top: none;
  border-bottom-color: #4a68c8;
  box-sizing: border-box;
  border-radius: 2px 2px 0 0;
}

.tb-title {
  display: flex;
  align-items: center;
  gap: 3px;
  height: 13px;
  padding: 0 2px;
  background: linear-gradient(#7c9be0, #6688d8);
  color: #d8e2f6;
  font-size: 6.5px;
  font-weight: 700;
}

.tb-title span {
  flex: 1;
  white-space: nowrap;
  overflow: hidden;
}

.tb-title svg {
  width: 10px;
  height: 10px;
}

.tb-title .x {
  width: 10px;
  height: 10px;
  line-height: 9px;
  text-align: center;
  border-radius: 1px;
  background: #cf7f90;
  color: #fff;
  font-size: 9px;
}

.tb-row {
  display: flex;
  align-items: center;
  height: 20px;
  padding-left: 0;
  overflow: hidden;
}

.tb-row svg,
.tb-sel-row svg {
  flex-shrink: 0;
  width: 13px;
  height: 13px;
}

.dd {
  flex-shrink: 0;
  margin: 0 4px 0 2px;
  border-top: 2px solid #222;
  border-left: 2px solid transparent;
  border-right: 2px solid transparent;
}

.sep {
  flex-shrink: 0;
  width: 1px;
  height: 14px;
  margin-right: 1px;
  background: #d0ccb8;
}

.auto .tb-row {
  height: 16px;
  padding-left: 4px;
  background: #ece9d8;
}

.tb-sel-row {
  display: flex;
  align-items: center;
  gap: 3px;
  height: 18px;
  padding-left: 3px;
  border-bottom: 1px solid #d8d4c0;
}

.xpsel {
  display: flex;
  align-items: center;
  justify-content: space-between;
  height: 13px;
  box-sizing: border-box;
  padding-left: 3px;
  background: #fff;
  border: 1px solid #c8c8d0;
  color: #222;
  font-size: 6.8px;
  flex-shrink: 0;
  white-space: nowrap;
}

.xparrow {
  position: relative;
  width: 11px;
  height: 11px;
  background: #c6d6f6;
}

.xparrow::after {
  content: "";
  position: absolute;
  left: 3px;
  top: 3px;
  width: 3px;
  height: 3px;
  border-right: 1.5px solid #3a5a9a;
  border-bottom: 1.5px solid #3a5a9a;
  transform: rotate(45deg);
}

/* preview window */
.apercu {
  position: absolute;
  left: 0;
  top: 0;
  width: 320px;
  height: 190px;
  background: #8cace8;
}

.ap-title {
  display: flex;
  align-items: center;
  height: 18px;
  padding: 0 2px 0 7px;
  gap: 3px;
  background: linear-gradient(#74a0e0, #86ace8);
  color: #cddcf4;
  font-size: 7.5px;
  font-weight: 700;
}

.ap-title svg {
  width: 11px;
  height: 11px;
}

.ap-title span {
  flex: 1;
}

.xp-b {
  display: block;
  width: 11px;
  height: 11px;
  border-radius: 2px;
  border: 1px solid #dfe8f8;
  background: linear-gradient(135deg, #7aa2ea, #3c6cd4);
  color: #fff;
  position: relative;
  font-size: 8px;
  line-height: 11px;
  text-align: center;
  font-weight: 700;
}

.xp-b.red {
  background: linear-gradient(135deg, #ee8a76, #c63c2a);
}

.g-min {
  position: absolute;
  left: 2px;
  bottom: 2px;
  width: 4px;
  height: 2px;
  background: #fff;
}

.g-max {
  position: absolute;
  left: 2px;
  top: 2px;
  width: 7px;
  height: 7px;
  box-sizing: border-box;
  border: 1px solid #fff;
  border-top-width: 2px;
}

.ap-body {
  display: flex;
  margin-left: 7px;
  height: 166px;
}

.ap-svg {
  display: block;
  background: #000;
}

.ap-scroll {
  position: relative;
  flex: 1;
  background: #f2f5fc;
}

.ap-up {
  display: block;
  height: 10px;
  margin: 2px 1px 0;
  background: #d4e0f6;
  border-radius: 1px;
  text-align: center;
}

.ap-up u {
  display: inline-block;
  width: 4px;
  height: 4px;
  margin-top: 4px;
  border-left: 1.5px solid #36538a;
  border-top: 1.5px solid #36538a;
  transform: rotate(45deg);
}

.ap-thumb {
  position: absolute;
  left: 1px;
  right: 2px;
  top: 134px;
  height: 10px;
  background: #d2def2;
}

/* parameter dialog */
.dlg {
  position: absolute;
  left: 3px;
  top: 184px;
  width: 391px;
  height: 286px;
  box-sizing: border-box;
  display: flex;
  flex-direction: column;
  background: #ece9d8;
  border-right: 2px solid #1050c8;
  border-bottom: 2px solid #1050c8;
  font-size: 6.3px;
  color: #2a2a2a;
}

.dlg-title {
  display: flex;
  align-items: center;
  justify-content: space-between;
  height: 18px;
  flex-shrink: 0;
  padding-right: 2px;
  background: linear-gradient(#0a58e4, #0c5ee8);
  color: #dce8fa;
  font-size: 7.5px;
  font-weight: 700;
  letter-spacing: 0.1px;
  white-space: nowrap;
}

.dlg-title span {
  width: 375px;
  overflow: hidden;
  margin-left: -1px;
}

.dlg-menu {
  display: flex;
  gap: 6px;
  height: 12px;
  flex-shrink: 0;
  align-items: center;
  padding-left: 2px;
  font-size: 6.6px;
}

.dlg-tools {
  display: flex;
  align-items: center;
  gap: 2.5px;
  height: 16px;
  flex-shrink: 0;
  padding-left: 4px;
  border-top: 1px solid #c8c4b0;
  border-bottom: 1px solid #c8c4b0;
  box-sizing: border-box;
}

.dlg-tools svg {
  width: 11px;
  height: 11px;
}

.tsep {
  width: 1px;
  height: 12px;
  background: #c8c4b0;
}

.dlg-body {
  display: flex;
  gap: 6px;
  height: 206px;
  margin-top: 8px;
  flex-shrink: 0;
}

.tree {
  width: 84px;
  height: 206px;
  flex-shrink: 0;
  box-sizing: border-box;
  padding-top: 1px;
  background: #fff;
  border-right: 1px solid #a0a0a0;
  border-bottom: 1px solid #c8c8c8;
  white-space: nowrap;
}

.node {
  display: flex;
  align-items: center;
  height: 10px;
  color: #444;
}

.node svg {
  flex-shrink: 0;
  width: 9px;
  height: 9px;
  margin-right: 1px;
  margin-left: -3px;
}

.node.bold {
  font-weight: 700;
  font-size: 7.1px;
  color: #222;
}

.node.child {
  padding-left: 6px;
}

.node.child svg {
  margin: 0 3px 0 0;
}

.node .sel {
  background: #2a64c4;
  color: #fff;
  padding: 0 2px 0 0;
}

.content {
  position: relative;
  width: 295px;
  display: flex;
  flex-direction: column;
}

.blue-head {
  height: 17px;
  line-height: 17px;
  padding-left: 3px;
  background: #1658c8;
  color: #c6dcf6;
  font-size: 7.2px;
  font-weight: 700;
  letter-spacing: 0.35px;
  flex-shrink: 0;
}

.grid-wrap {
  display: flex;
  width: 293px;
  height: 89px;
  margin: 11px 0 0 1px;
  border: 1px solid #aaa89a;
  border-right: none;
  box-sizing: border-box;
  flex-shrink: 0;
}

.grid {
  display: grid;
  grid-template-columns: 12px 27px 88px 12px 19px 88px 36px;
  grid-auto-rows: 11px;
  width: 282px;
  flex-shrink: 0;
}

.hd {
  box-sizing: border-box;
  text-align: center;
  line-height: 10px;
  background: #ece9d8;
  border-top: 1px solid #fff;
  border-left: 1px solid #fff;
  border-right: 1px solid #6a675a;
  border-bottom: 1px solid #6a675a;
  overflow: hidden;
}

.cell {
  box-sizing: border-box;
  padding-left: 2px;
  line-height: 10px;
  background: #fff;
  border-right: 1px solid #c8c8c8;
  border-bottom: 1px solid #c8c8c8;
  white-space: nowrap;
  overflow: hidden;
}

.cell.grey {
  background: #dcdcdc;
}

.chk {
  padding: 1px;
  background: #ece9d8;
}

.check {
  display: block;
  width: 8px;
  height: 8px;
  box-sizing: border-box;
  background: #e6f6ea;
  border: 1px solid #4a9a78;
  color: #1a7a3a;
  font-size: 6px;
  line-height: 6px;
  text-align: center;
  font-weight: 700;
  font-family: "DejaVu Sans", sans-serif;
}

.swatch {
  padding: 0;
  border: 1px solid #999;
}

.pos {
  display: flex;
  align-items: center;
  gap: 1px;
  padding-left: 1px;
}

.yel {
  width: 10px;
  height: 6px;
  box-sizing: border-box;
  border: 1px solid #333;
  background: linear-gradient(#f0e070 0 40%, #333 40% 60%, #f0e070 60%);
}

.grid-scroll {
  flex: 1;
  position: relative;
  background: #f4f6fc;
}

.sb-btn {
  position: absolute;
  left: 0;
  right: 1px;
  height: 10px;
  background: #d6e2f8;
  text-align: center;
}

.sb-btn:first-child {
  top: 0;
}

.sb-btn:last-child {
  bottom: 0;
}

.sb-btn u {
  display: inline-block;
  width: 3px;
  height: 3px;
  border-left: 1.5px solid #3a5a9a;
  border-top: 1.5px solid #3a5a9a;
}

.sb-btn .up {
  margin-top: 4px;
  transform: rotate(45deg);
}

.sb-btn .down {
  margin-top: 2px;
  transform: rotate(225deg);
}

.sb-thumb {
  position: absolute;
  left: 0;
  right: 1px;
  top: 45px;
  height: 33px;
  background: #c8d8f4;
}

.tip {
  position: absolute;
  left: 133px;
  top: 115px;
  z-index: 2;
  width: 95px;
  height: 12px;
  line-height: 10px;
  box-sizing: border-box;
  padding-left: 2px;
  background: #ffffe1;
  border: 1px solid #222;
  color: #111;
  font-size: 6.1px;
  white-space: nowrap;
}

.actions {
  display: flex;
  justify-content: flex-end;
  gap: 5px;
  width: 294px;
  height: 14px;
  margin-top: 7px;
  flex-shrink: 0;
}

.actions button {
  width: 15px;
  height: 14px;
  padding: 0;
  display: flex;
  align-items: center;
  justify-content: center;
  background: #f2f0e6;
  border: 1px solid #c8c5b4;
  border-radius: 2px;
  font-family: "Liberation Sans", Arial, sans-serif;
  font-size: 9px;
  line-height: 1;
}

.actions .first {
  color: #222;
}

.first span {
  font-weight: 700;
}

.tdown {
  border-top: 6px solid #18b0b0;
  border-left: 6px solid transparent;
  border-right: 6px solid transparent;
}

.tup {
  border-bottom: 6px solid #18b0b0;
  border-left: 6px solid transparent;
  border-right: 6px solid transparent;
}

.plus {
  color: #108030;
  font-weight: 700;
}

.actions .plus {
  font-size: 13px;
}

.del {
  color: #e01818;
  font-weight: 700;
}

.group {
  width: 133px;
  height: 60px;
  margin: 6px 0 0 1px;
  box-sizing: border-box;
  padding: 0 3px;
  border: 1px solid #d4d0bd;
  border-radius: 3px;
  flex-shrink: 0;
}

.group legend {
  padding: 0;
  margin-left: 1px;
  color: #3050a8;
  font-size: 6.3px;
  line-height: 7px;
  white-space: nowrap;
}

.f-row {
  display: flex;
  align-items: center;
  justify-content: space-between;
  padding-right: 3px;
}

.r1 {
  height: 12px;
  margin-top: 3px;
}

.r2 {
  height: 14px;
  margin-top: 2px;
}

.r3 {
  height: 12px;
  margin-top: 4px;
}

.inp {
  width: 40px;
  height: 12px;
  line-height: 11px;
  box-sizing: border-box;
  padding-right: 1px;
  text-align: right;
  background: #fff;
  border: 1px solid #c0c0c0;
  font-size: 7px;
}

.f-sel {
  width: 103px;
}

.font-btn {
  width: 15px;
  height: 14px;
  padding: 0;
  background: #f2f0e6;
  border: 1px solid #c8c5b4;
  border-radius: 2px;
  font-family: "Liberation Serif", serif;
  font-weight: 700;
  font-size: 8px;
}

.dlg-status {
  display: flex;
  gap: 3px;
  height: 13px;
  margin-top: 5px;
  line-height: 13px;
  flex-shrink: 0;
  border-top: 1px solid #d4d0bd;
  border-bottom: 1px solid #f8f8f0;
}

.s1 {
  flex: 1;
}

.s2 {
  width: 37px;
  margin-right: 5px;
  padding-left: 2px;
  border-left: 1px solid #c8c4b0;
}
</style>
